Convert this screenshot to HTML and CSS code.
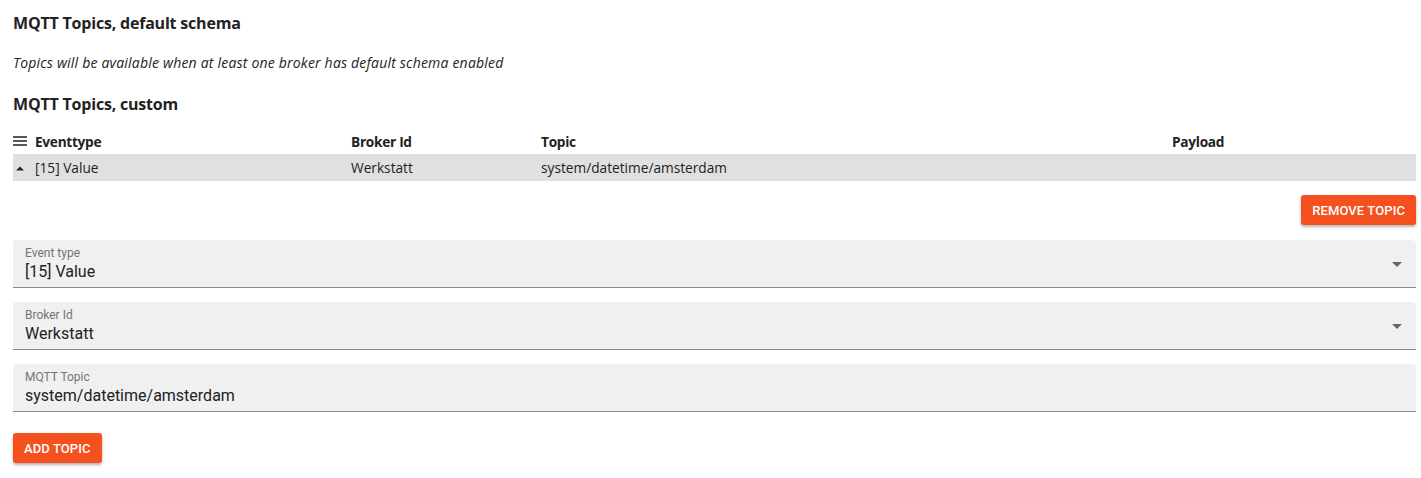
FILE: index.html
```html
<!DOCTYPE html>
<html lang="en">
<head>
    <meta charset="UTF-8">
    <title>MQTT Topics</title>
    <link rel="stylesheet" href="styles.css">
</head>
<body>
<div class="page">
    <h2 class="title">MQTT Topics, default schema</h2>
    <p class="note">Topics will be available when at least one broker has default schema enabled</p>
    <h2 class="title title2">MQTT Topics, custom</h2>

    <div class="table">
        <div class="row head">
            <div class="cell c1">
                <svg class="menu" width="14" height="10" viewBox="0 0 14 10"><path d="M0 1h14M0 5h14M0 9h14" stroke="#222" stroke-width="1.6"/></svg>
                Eventtype
            </div>
            <div class="cell c2">Broker Id</div>
            <div class="cell c3">Topic</div>
            <div class="cell c4">Payload</div>
        </div>
        <div class="row item">
            <div class="cell c1">
                <svg class="caret" width="14" height="8" viewBox="0 0 14 8"><path d="M3 6.5L7 2.5L11 6.5Z" fill="#222"/></svg>
                [15] Value
            </div>
            <div class="cell c2">Werkstatt</div>
            <div class="cell c3">system/datetime/amsterdam</div>
            <div class="cell c4"></div>
        </div>
    </div>

    <div class="actions right">
        <button class="btn">REMOVE TOPIC</button>
    </div>

    <div class="field select">
        <label>Event type</label>
        <div class="value">[15] Value</div>
        <span class="arrow"></span>
    </div>
    <div class="field select">
        <label>Broker Id</label>
        <div class="value">Werkstatt</div>
        <span class="arrow"></span>
    </div>
    <div class="field">
        <label>MQTT Topic</label>
        <div class="value">system/datetime/amsterdam</div>
    </div>

    <div class="actions add">
        <button class="btn">ADD TOPIC</button>
    </div>
</div>
</body>
</html>
```

FILE: styles.css
```css
body{
    margin: 0;
    background: #fff;
    color: #222;
    font-family: "Open Sans", "Noto Sans", sans-serif;
}
.page{
    padding: 12px 5px 0 13px;
}
.title{
    margin: 0;
    font-size: 16px;
    font-weight: 700;
    line-height: 22px;
    letter-spacing: -0.2px;
}
.note{
    margin: 20px 0 0;
    font-size: 14px;
    font-style: italic;
    line-height: 18px;
    letter-spacing: 0.2px;
}
.title2{
    margin-top: 21px;
}
.table{
    margin-top: 13px;
    font-size: 13.7px;
}
.row{
    display: flex;
    align-items: center;
}
.row.head{
    height: 26px;
    font-weight: 700;
    letter-spacing: -0.3px;
}
.row.item{
    height: 27px;
    background: #e0e0e0;
}
.cell{
    white-space: nowrap;
}
.c1{
    width: 338px;
    display: flex;
    align-items: center;
}
.c1 svg{
    margin-right: 8px;
}
.c2{ width: 190px; }
.c3{ width: 631px; }
.c4{ flex: 1; }
.actions{
    display: flex;
    margin: 14px 0 15px;
}
.actions.right{
    justify-content: flex-end;
}
.actions.add{
    margin-top: 21px;
}
.btn{
    font-family: Roboto, "Liberation Sans", sans-serif;
    font-size: 13px;
    font-weight: 500;
    color: #fff;
    background: #f4511e;
    border: none;
    border-radius: 3px;
    height: 30px;
    padding: 0 11px;
    box-shadow: 0 2px 3px rgba(0,0,0,0.3);
    letter-spacing: 0.1px;
}
.field{
    position: relative;
    background: #f0f0f0;
    border-radius: 4px 4px 0 0;
    border-bottom: 1px solid #8a8a8a;
    height: 47px;
    margin-bottom: 14px;
    padding: 0 12px;
    font-family: Roboto, "Liberation Sans", sans-serif;
    box-sizing: content-box;
}
.field label{
    display: block;
    padding-top: 6px;
    font-size: 12px;
    line-height: 14px;
    color: #757575;
}
.field .value{
    padding-top: 1px;
    font-size: 16px;
    line-height: 22px;
    color: #222;
}
.arrow{
    position: absolute;
    right: 14px;
    top: 22px;
    width: 0;
    height: 0;
    border-left: 5px solid transparent;
    border-right: 5px solid transparent;
    border-top: 5px solid #666;
}
```
